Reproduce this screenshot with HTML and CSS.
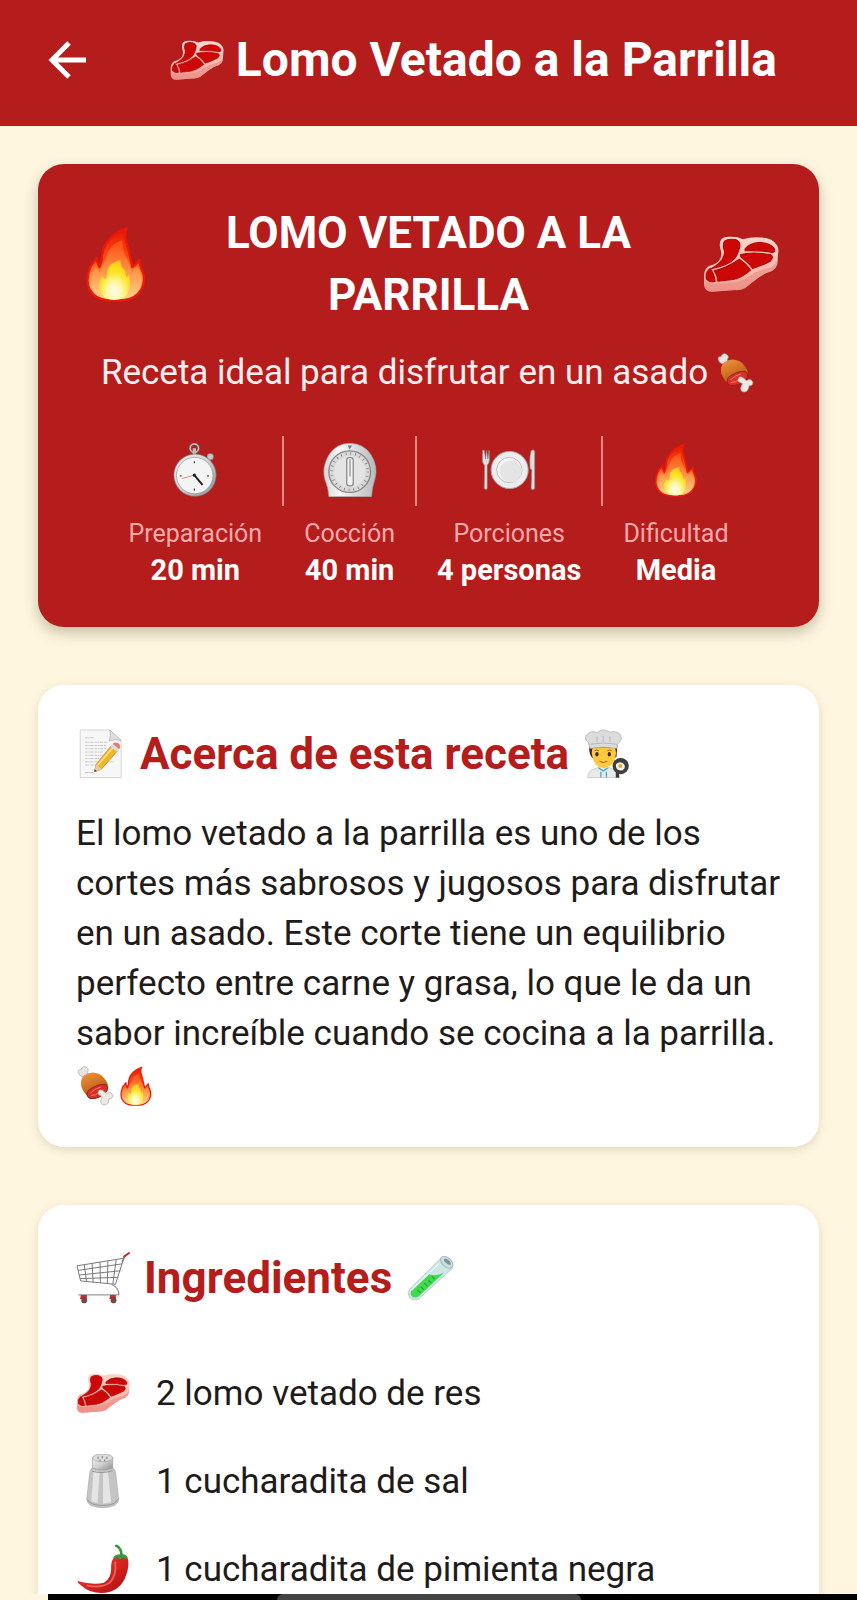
FILE: index.html
```html
<!DOCTYPE html>
<html lang="es">
<head>
<meta charset="utf-8">
<meta name="viewport" content="width=device-width, initial-scale=1">
<title>Lomo Vetado a la Parrilla</title>
<link rel="stylesheet" href="styles.css">
</head>
<body>
<svg class="sprite" aria-hidden="true">
  <defs>
    <linearGradient id="flameOuter" x1="0" y1="0" x2="0" y2="1"><stop offset="0" stop-color="#e81503"/><stop offset=".4" stop-color="#fb4a12"/><stop offset=".75" stop-color="#ffa24c"/><stop offset="1" stop-color="#ffe7a0"/></linearGradient>
    <linearGradient id="flameMid" x1="0" y1="0" x2="0" y2="1"><stop offset="0" stop-color="#fb4a12"/><stop offset=".45" stop-color="#ff8a3c"/><stop offset="1" stop-color="#ffd28a"/></linearGradient>
    <radialGradient id="flameInner" cx=".5" cy=".8" r=".7"><stop offset="0" stop-color="#fffef0"/><stop offset=".35" stop-color="#fff7a8"/><stop offset=".75" stop-color="#ffe21f"/><stop offset="1" stop-color="#ffd21f"/></radialGradient>
    <linearGradient id="metal" x1="0" y1="0" x2="1" y2="1"><stop offset="0" stop-color="#f4f4f4"/><stop offset=".5" stop-color="#cfcfcf"/><stop offset="1" stop-color="#8b8b8b"/></linearGradient>
    <linearGradient id="silver" x1="0" y1="0" x2="1" y2="0"><stop offset="0" stop-color="#d6d6d6"/><stop offset=".3" stop-color="#f7f7f7"/><stop offset="1" stop-color="#b9b9b9"/></linearGradient>
    <linearGradient id="meat" x1=".2" y1="0" x2=".7" y2="1"><stop offset="0" stop-color="#ea9440"/><stop offset=".55" stop-color="#cc6a1c"/><stop offset="1" stop-color="#944010"/></linearGradient>
    <linearGradient id="chiliSkin" x1="0" y1="0" x2="1" y2="1"><stop offset="0" stop-color="#f05a4c"/><stop offset=".5" stop-color="#d9241f"/><stop offset="1" stop-color="#a50e12"/></linearGradient>
    <linearGradient id="fat" x1="0" y1="0" x2="0" y2="1"><stop offset="0" stop-color="#fbd6cb"/><stop offset=".7" stop-color="#f7b5aa"/><stop offset="1" stop-color="#ea9188"/></linearGradient>
  </defs>
  <symbol id="steak" viewBox="42 25 224 224">
    <path fill="url(#fat)" d="M93 70Q97 57 120 57Q143 56 160 64Q185 56 213 59Q247 60 261 83Q266 92 263 109L261 138Q257 151 245 158Q222 165 204 178Q183 193 166 208Q155 215 137 214L68 219Q47 218 45 199L45 170Q46 149 61 142Q78 139 88 128Q99 116 95 99Q89 84 93 70Z"/>
    <path fill="#ee9288" d="M51 190Q62 198 84 195L133 192Q159 189 182 170Q210 153 240 147Q257 140 262 120L261 138Q257 151 245 158Q222 165 204 178L166 208Q155 215 137 214L68 219Q47 218 46 195Z" opacity=".75"/>
    <path fill="#cc0806" stroke="#b20606" stroke-width="3" d="M105 70Q116 61 137 65Q151 70 151 81Q150 96 138 118Q119 140 66 151Q89 138 99 123Q107 108 105 98Q98 82 105 70ZM166 92Q181 75 207 74Q239 73 252 91Q257 102 246 103Q205 96 166 98ZM153 109Q174 103 207 105L242 110Q252 116 241 128Q219 141 188 150Q178 135 153 116ZM75 157Q111 149 149 123Q169 136 182 155Q157 177 130 183L86 188Q84 170 75 157ZM63 150Q75 166 78 188Q62 193 52 181Q48 162 63 150Z"/>
  </symbol>
  <symbol id="fire" viewBox="56 50 224 224">
    <path fill="url(#flameOuter)" stroke="#ed1908" stroke-width="7" stroke-linejoin="round" d="M200 57Q190 74 199 101Q208 130 216 171Q226 166 237 150Q237 165 247 186Q256 211 243 236Q226 267 186 269L145 269Q105 266 90 236Q77 210 92 171Q100 157 112 144Q110 155 119 171Q127 156 127 136Q130 99 168 73Q183 62 200 57Z"/>
    <path fill="url(#flameMid)" d="M187 91Q185 120 200 146L215 185L233 170Q256 220 226 250Q202 268 165 266Q113 267 98 228Q91 196 108 171L119 187Q138 153 142 132Q151 104 187 91Z"/>
    <path fill="url(#flameInner)" d="M181 151Q180 168 194 181L199 202L206 194Q213 230 202 252Q187 269 160 268Q126 267 119 237Q117 213 127 199L138 208Q143 193 142 181Q149 157 181 151Z"/>
  </symbol>
  <symbol id="meatbone" viewBox="48 38 124 124">
    <path fill="#e9e6e2" stroke="#aaa49f" stroke-width="2" d="M55 58Q53 49 64 49Q67 37 79 41Q91 48 83 58L84 69L71 72Q57 70 55 58Z"/>
    <path fill="url(#meat)" d="M73 67Q96 51 120 63Q137 73 147 95Q147 117 130 128Q109 143 94 138Q75 130 64 101Q61 78 73 67Z"/>
    <path fill="#d92f26" stroke="#8b251a" stroke-width="3" d="M87 113Q114 93 138 95Q151 101 143 117Q121 142 91 139Q76 130 87 113Z"/>
    <path fill="none" stroke="#f17b6d" stroke-width="3" d="M93 121Q110 106 126 103M94 130Q110 129 120 120"/>
    <path fill="#edeae6" stroke="#aaa49f" stroke-width="2" d="M116 119Q120 108 131 114L143 124Q155 115 162 128Q164 139 150 140Q150 156 136 159Q122 158 125 144L130 133L117 126Z"/>
  </symbol>
  <symbol id="stopwatch" viewBox="52 50 166 166">
    <g fill="none" stroke="#868686">
      <circle cx="133" cy="66" r="13" stroke-width="7"/><circle cx="133" cy="66" r="13" stroke="#d6d6d6" stroke-width="3"/>
      <path stroke="#bdbdbd" stroke-width="10" d="M133 66V84"/><path stroke-width="7" d="M165 107L179 94"/>
    </g>
    <circle cx="182" cy="92" r="10" fill="#c9c9c9" stroke="#777" stroke-width="2"/>
    <circle cx="135" cy="149" r="65" fill="url(#metal)" stroke="#777" stroke-width="2"/>
    <circle cx="134" cy="150" r="56" fill="#f4f4f4" stroke="#919191" stroke-width="2"/>
    <path fill="none" stroke="#555" stroke-width="4" d="M133 106V112M133 190V197M88 151H94M172 151H178"/>
    <path stroke="#e08a86" stroke-width="3" d="M133 149L95 159"/><path stroke="#222" stroke-width="6" d="M133 149L158 179"/><circle cx="133" cy="149" r="5" fill="#222"/>
  </symbol>
  <symbol id="timer" viewBox="510 50 166 166">
    <path fill="url(#silver)" stroke="#a1a1a1" stroke-width="2" d="M528 215Q526 185 516 163Q505 125 528 87Q549 52 592 51Q637 52 658 87Q681 125 669 163Q661 185 659 215Z"/>
    <circle cx="592" cy="138" r="64" fill="#d9d9d9" stroke="#858585" stroke-width="4"/>
    <circle cx="592" cy="138" r="56" fill="none" stroke="#686868" stroke-width="8" stroke-dasharray="2 12.7"/>
    <circle cx="592" cy="138" r="48" fill="#e4e4e4"/>
    <path fill="#777" d="M586 58H599L592 70Z"/>
    <rect x="583" y="95" width="20" height="87" rx="8" fill="#f2f2f2" stroke="#8b8b8b" stroke-width="4"/><path stroke="#777" stroke-width="3" d="M593 100V153"/>
  </symbol>
  <symbol id="plate" viewBox="122 50 166 166">
    <circle cx="207" cy="133" r="57" fill="#ededed" stroke="#aaa" stroke-width="3"/>
    <circle cx="206" cy="133" r="39" fill="#f4f4f4" stroke="#bdbdbd" stroke-width="3"/>
    <circle cx="210" cy="137" r="34" fill="#e5e5e5"/>
    <path fill="#ddd" stroke="#888" stroke-width="2" d="M124 72L123 101Q123 114 130 118L129 190Q134 197 138 190L138 118Q145 113 145 101L144 72L140 99L136 72L133 99L129 72ZM273 74Q280 67 284 75V190Q278 198 273 190L275 134L270 128Q267 94 273 74Z"/>
  </symbol>
  <symbol id="memo" viewBox="48 40 154 154">
    <path fill="#f7f7f7" stroke="#c2c2c2" stroke-width="2" d="M61 43H152L187 75V190H61Z"/>
    <path fill="#dedede" stroke="#aaa" stroke-width="2" d="M152 43Q156 61 150 77Q168 70 187 75Z"/>
    <path fill="none" stroke="#aaa" stroke-width="2" stroke-dasharray="8 2 4 2 10 3" d="M76 67H105M76 81H145M76 91H140M76 101H143M76 111H135M76 121H130M76 131H124M76 141H117M76 151H108M76 174H104M132 141H164"/>
    <path fill="#efb62d" stroke="#b98218" stroke-width="2" d="M105 172L109 150L157 91L177 106L126 164Z"/>
    <path stroke="#ffe17a" stroke-width="5" d="M115 151L163 96"/><path fill="#e8cda3" d="M105 172L109 150Q119 151 119 158Q127 158 126 164Z"/><path fill="#333" d="M105 172L106 164L112 169Z"/>
    <path fill="#ddd" d="M154 94L161 86L181 102L174 110Z"/><path fill="#df8378" d="M161 86Q168 78 179 84Q189 94 181 102Z"/>
  </symbol>
  <symbol id="chef" viewBox="68 39 154 154">
    <path fill="#512417" d="M87 88H174L171 125L160 130H100Q85 121 87 88Z"/>
    <path fill="#ffca3d" d="M98 96H165Q173 109 167 127Q161 157 132 160Q103 157 98 127Q92 113 98 96Z"/>
    <path fill="#dcdcdc" stroke="#a7a7a7" stroke-width="2" d="M89 99L84 79Q70 71 79 57Q92 42 111 50Q130 34 151 49Q170 43 183 56Q192 73 175 84L172 99Q130 91 89 99Z"/>
    <path fill="none" stroke="#b6b6b6" stroke-width="3" d="M89 86Q130 78 173 86M111 62V80M130 60V79M151 61V79"/>
    <g fill="#40271a"><ellipse cx="111" cy="117" rx="5" ry="7"/><ellipse cx="149" cy="117" rx="5" ry="7"/></g>
    <path fill="none" stroke="#a55624" stroke-width="3" d="M104 106Q110 101 117 106M143 106Q150 101 156 106M119 138Q130 147 143 138"/>
    <path fill="#e9e9e9" stroke="#bbb" stroke-width="2" d="M82 189Q82 168 105 161L117 156L130 166L144 156L160 163Q179 170 181 189Z"/>
    <path fill="none" stroke="#47acc7" stroke-width="4" d="M116 159L130 168L145 159M123 171V188M140 171V188"/>
    <path stroke="#383838" stroke-width="10" d="M174 169V189"/><circle cx="184" cy="153" r="25" fill="#3c3e42"/><path fill="#f3f0ea" d="M170 147Q182 136 194 147Q202 160 188 167Q166 167 170 147Z"/><circle cx="183" cy="153" r="6" fill="#f1a52b"/>
  </symbol>
  <symbol id="cart" viewBox="50 44 164 164">
    <g fill="none" stroke="#777" stroke-width="3" stroke-linejoin="round">
      <path d="M195 66L53 89L64 135L170 145L195 66M56 103L190 83M59 117L185 104M62 128L178 124M75 86L82 136M99 82L102 139M123 78L124 141M147 75L145 143M172 71L162 144"/>
      <path stroke="#999" stroke-width="4" d="M158 145Q181 157 180 177L162 177H57"/>
    </g>
    <path stroke="#ca2930" stroke-width="6" stroke-linecap="round" d="M196 61L211 50"/>
    <path stroke="#777" stroke-width="4" d="M190 78L198 61"/><path fill="#d1272c" d="M65 178H83V190H62ZM154 178H171V190H151Z"/>
    <g fill="#555" stroke="#a22" stroke-width="2"><circle cx="75" cy="194" r="8"/><circle cx="164" cy="194" r="8"/></g>
  </symbol>
  <symbol id="tube" viewBox="45 46 156 156">
    <path fill="#cce5e7" stroke="#b4d0d5" stroke-width="3" d="M152 64L190 94L85 189Q68 198 55 184Q47 170 57 158Z"/>
    <path fill="#42d94c" d="M117 112Q140 120 164 107L84 182Q72 189 62 180Q56 171 63 163Z"/>
    <path fill="none" stroke="#22a544" stroke-width="4" d="M126 119L135 128M114 130L124 140M102 140L112 150M91 151L101 161M81 162L90 170"/>
    <path stroke="#f4ffff" stroke-width="5" opacity=".6" d="M148 79L62 162"/>
    <ellipse cx="172" cy="75" rx="23" ry="14" transform="rotate(41 172 75)" fill="#cbdcdf" stroke="#a3babf" stroke-width="3"/><ellipse cx="174" cy="73" rx="13" ry="6" transform="rotate(41 174 73)" fill="#7d9599"/>
  </symbol>
  <symbol id="salt" viewBox="229 303 166 166">
    <path fill="#c4c4c4" stroke="#aaa" stroke-width="2" d="M277 347Q272 352 271 362L262 442Q264 467 311 468Q358 467 360 442L351 362Q350 350 342 345Z"/>
    <path fill="#e4e4e4" d="M283 354L276 448L295 454L302 358ZM312 359V456L337 451L327 356Z"/><path fill="none" stroke="#969696" stroke-width="3" d="M264 442Q271 461 311 461Q350 461 358 442M279 356Q309 365 342 354"/>
    <path fill="url(#metal)" stroke="#999" stroke-width="2" d="M280 314V346Q311 358 342 346V314Z"/><ellipse cx="311" cy="315" rx="31" ry="12" fill="#ddd" stroke="#999" stroke-width="2"/>
    <path fill="none" stroke="#888" stroke-width="4" stroke-linecap="round" d="M297 313V317M310 310V315M324 313V317M303 321V323M317 321V323"/>
  </symbol>
  <symbol id="chili" viewBox="230 567 166 166">
    <path fill="url(#chiliSkin)" d="M345 617Q337 628 338 650Q337 681 316 692Q286 701 235 687Q234 693 244 699Q271 724 309 724Q359 722 380 680Q398 636 387 612Q369 602 345 617Z"/>
    <path fill="none" stroke="#f47b6b" stroke-width="6" stroke-linecap="round" opacity=".7" d="M351 630Q355 672 332 693Q307 709 265 701"/>
    <path fill="#359c3d" d="M350 576L356 575Q373 585 374 605Q384 605 389 615Q380 624 374 615Q364 626 358 615Q349 622 344 614Q352 605 365 605Q367 590 350 581Z"/>
  </symbol>
</svg>

<header class="topbar">
  <button class="back" type="button" aria-label="Volver">
    <svg viewBox="0 0 40 40" aria-hidden="true"><path d="M38 20H4M21 3L4 20L21 37"/></svg>
  </button>
  <h1 class="topbar-title"><svg class="icon"><use href="#steak"/></svg><span>Lomo Vetado a la Parrilla</span></h1>
</header>

<main class="content">
  <section class="hero">
    <div class="hero-head">
      <svg class="icon icon-xl"><use href="#fire"/></svg>
      <h2 class="hero-title">LOMO VETADO A LA PARRILLA</h2>
      <svg class="icon icon-xl"><use href="#steak"/></svg>
    </div>
    <p class="hero-sub"><span>Receta ideal para disfrutar en un asado</span><svg class="icon icon-sm"><use href="#meatbone"/></svg></p>
    <ul class="stats">
      <li class="stat"><svg class="icon"><use href="#stopwatch"/></svg><span class="label">Preparación</span><strong>20 min</strong></li>
      <li class="rule" role="presentation"></li>
      <li class="stat"><svg class="icon"><use href="#timer"/></svg><span class="label">Cocción</span><strong>40 min</strong></li>
      <li class="rule" role="presentation"></li>
      <li class="stat"><svg class="icon"><use href="#plate"/></svg><span class="label">Porciones</span><strong>4 personas</strong></li>
      <li class="rule" role="presentation"></li>
      <li class="stat"><svg class="icon"><use href="#fire"/></svg><span class="label">Dificultad</span><strong>Media</strong></li>
    </ul>
  </section>

  <section class="card">
    <h2 class="card-title"><svg class="icon icon-md"><use href="#memo"/></svg><span>Acerca de esta receta</span><svg class="icon icon-md"><use href="#chef"/></svg></h2>
    <p class="about">El lomo vetado a la parrilla es uno de los cortes más sabrosos y jugosos para disfrutar en un asado. Este corte tiene un equilibrio perfecto entre carne y grasa, lo que le da un sabor increíble cuando se cocina a la parrilla. <span class="pair"><svg class="icon icon-sm"><use href="#meatbone"/></svg><svg class="icon icon-sm"><use href="#fire"/></svg></span></p>
  </section>

  <section class="card card-list">
    <h2 class="card-title"><svg class="icon"><use href="#cart"/></svg><span>Ingredientes</span><svg class="icon icon-md"><use href="#tube"/></svg></h2>
    <ul class="ingredients">
      <li><svg class="icon"><use href="#steak"/></svg><span>2 lomo vetado de res</span></li>
      <li><svg class="icon"><use href="#salt"/></svg><span>1 cucharadita de sal</span></li>
      <li><svg class="icon"><use href="#chili"/></svg><span>1 cucharadita de pimienta negra</span></li>
    </ul>
  </section>
</main>
<div class="navbar"><span class="handle"></span></div>
</body>
</html>
```
FILE: styles.css
```css
* { box-sizing: border-box; }
body {
  margin: 0;
  height: 100vh;
  display: flex;
  flex-direction: column;
  overflow: hidden;
  background: #fef6df;
  color: #1f1b1b;
  font-family: Roboto, "Noto Sans", sans-serif;
}
h1, h2, p, ul { margin: 0; padding: 0; }
ul { list-style: none; }
.sprite { position: absolute; width: 0; height: 0; }
.icon { width: 54px; height: 54px; flex: none; display: block; }
.icon-xl { width: 76px; height: 76px; }
.icon-md { width: 50px; height: 50px; }
.icon-sm { width: 40px; height: 40px; }

.topbar {
  flex: none;
  height: 126px;
  padding: 0 48px 6px;
  display: flex;
  align-items: center;
  background: #b51c1c;
  color: #fff;
}
.back { width: 40px; height: 40px; padding: 0; border: 0; background: none; }
.back svg { display: block; width: 40px; height: 40px; fill: none; stroke: #fff; stroke-width: 5; }
.topbar-title {
  flex: 1;
  display: flex;
  align-items: center;
  justify-content: flex-end;
  gap: 12px;
  padding-right: 32px;
  font-size: 48px;
  line-height: 60px;
  font-weight: 700;
  white-space: nowrap;
}

.content {
  flex: 1;
  min-height: 0;
  overflow: hidden;
  padding: 38px 38px 0;
}
.hero, .card { border-radius: 26px; padding: 38px; }
.hero {
  background: #b51c1c;
  color: #fff;
  box-shadow: 0 6px 14px rgba(60, 50, 20, .28);
}
.hero-head { display: flex; align-items: center; justify-content: space-between; padding: 0 2px; }
.hero-title {
  width: 440px;
  text-align: center;
  font-size: 44px;
  line-height: 62px;
  font-weight: 700;
}
.hero-sub {
  display: flex;
  align-items: center;
  justify-content: center;
  gap: 8px;
  padding-top: 22px;
  font-size: 35px;
  line-height: 50px;
  color: #ffeeee;
}
.stats { display: flex; justify-content: center; gap: 20px; padding-top: 38px; }
.stat { display: flex; flex-direction: column; align-items: center; padding-top: 7px; }
.rule { width: 2px; height: 70px; background: #ee8585; }
.label { padding-top: 20px; font-size: 25px; line-height: 34px; color: #f7a9a9; }
.stat strong { font-size: 29px; line-height: 38px; font-weight: 700; }

.card {
  margin-top: 58px;
  background: #fff;
  box-shadow: 0 3px 10px rgba(60, 50, 20, .14);
}
.card-list { padding-top: 42px; }
.card-title {
  display: flex;
  align-items: center;
  gap: 14px;
  font-size: 44px;
  line-height: 62px;
  font-weight: 700;
  color: #b51c1c;
}
.about { padding-top: 24px; font-size: 35px; line-height: 50px; }
.pair { display: inline-flex; vertical-align: middle; }
.ingredients { padding-top: 40px; }
.ingredients li {
  display: flex;
  align-items: center;
  gap: 26px;
  height: 88px;
  font-size: 35px;
}
.navbar {
  flex: none;
  height: 6px;
  margin-left: 48px;
  display: flex;
  justify-content: center;
  background: #000;
}
.handle { width: 304px; margin-right: 48px; border-radius: 6px 6px 0 0; background: #444; }
```
